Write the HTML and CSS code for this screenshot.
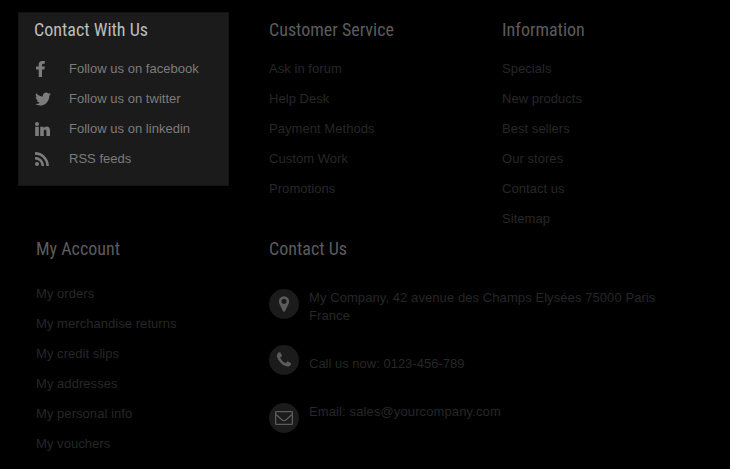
FILE: index.html
```html
<!DOCTYPE html>
<html lang="en">
<head>
<meta charset="utf-8">
<title>Footer</title>
<link rel="stylesheet" href="styles.css">
</head>
<body>
<footer class="footer">
  <section class="block social">
    <h4>Contact With Us</h4>
    <ul>
      <li><svg class="icon facebook" viewBox="0 0 9 16"><path d="M8.8.1V2.8H7.3Q6 2.8 6 4V5.6H8.8L8.4 8.4H6V16H2.7V8.4H0V5.6H2.7V3.6Q2.7 0 6.3 0Q7.8 0 8.8.1Z"/></svg><a>Follow us on facebook</a></li>
      <li><svg class="icon twitter" viewBox="0 0 1792 1792"><path d="M1684 408q-67 98-162 167 1 14 1 42 0 130-38 259.5t-115.5 248.5-184.5 210.5-258 146-323 54.5q-271 0-496-145 35 4 78 4 225 0 401-138-105-2-188-64.5t-114-159.5q33 5 61 5 43 0 85-11-112-23-185.5-111.5t-73.5-205.5v-4q68 38 146 41-66-44-105-115t-39-154q0-88 44-163 121 149 294.5 238.5t371.5 99.5q-8-38-8-74 0-134 94.5-228.5t228.5-94.5q140 0 236 102 109-21 205-78-37 115-142 178 93-10 186-50z"/></svg><a>Follow us on twitter</a></li>
      <li><svg class="icon linkedin" viewBox="0 0 15 14"><circle cx="2" cy="2" r="2"/><path d="M.2 4.8H3.8V14H.2ZM5.2 4.8H8.6V6Q9.6 4.5 11.5 4.5Q15 4.5 15 8.6V14H11.4V9.2Q11.4 7.4 10.1 7.4Q8.8 7.4 8.8 9.2V14H5.2Z"/></svg><a>Follow us on linkedin</a></li>
      <li><svg class="icon rss" viewBox="0 0 14 14"><circle cx="2" cy="12" r="2"/><path class="wave" d="M0 6.1A7.9 7.9 0 0 1 7.9 14M0 1.4A12.6 12.6 0 0 1 12.6 14"/></svg><a>RSS feeds</a></li>
    </ul>
  </section>
  <section class="block">
    <h4>Customer Service</h4>
    <ul>
      <li><a>Ask in forum</a></li>
      <li><a>Help Desk</a></li>
      <li><a>Payment Methods</a></li>
      <li><a>Custom Work</a></li>
      <li><a>Promotions</a></li>
    </ul>
  </section>
  <section class="block">
    <h4>Information</h4>
    <ul>
      <li><a>Specials</a></li>
      <li><a>New products</a></li>
      <li><a>Best sellers</a></li>
      <li><a>Our stores</a></li>
      <li><a>Contact us</a></li>
      <li><a>Sitemap</a></li>
    </ul>
  </section>
  <section class="block account">
    <h4>My Account</h4>
    <ul>
      <li><a>My orders</a></li>
      <li><a>My merchandise returns</a></li>
      <li><a>My credit slips</a></li>
      <li><a>My addresses</a></li>
      <li><a>My personal info</a></li>
      <li><a>My vouchers</a></li>
    </ul>
  </section>
  <section class="block contact">
    <h4>Contact Us</h4>
    <div class="entry address">
      <span class="disc"><svg viewBox="0 0 1792 1792"><path d="M1152 640q0-106-75-181t-181-75-181 75-75 181 75 181 181 75 181-75 75-181zm256 0q0 109-33 179l-364 774q-16 33-47.5 52t-67.5 19-67.5-19-46.5-52l-365-774q-33-70-33-179 0-212 150-362t362-150 362 150 150 362z"/></svg></span>
      <p>My Company, 42 avenue des Champs Elysées 75000 Paris France</p>
    </div>
    <div class="entry phone">
      <span class="disc"><svg viewBox="0 0 1792 1792"><path d="M1600 1240q0 27-10 70.5t-21 68.5q-21 50-122 106-94 51-186 51-27 0-53-3.5t-57.5-12.5-47-14.5-55.5-20.5-49-18q-98-35-175-83-127-79-264-216t-216-264q-48-77-83-175-3-9-18-49t-20.5-55.5-14.5-47-12.5-57.5-3.5-53q0-92 51-186 56-101 106-122 25-11 68.5-21t70.5-10q14 0 21 3 18 6 53 76 11 19 30 54t35 63.5 31 53.5q3 4 17.5 25t21.5 35.5 7 28.5q0 20-28.5 50t-62 55-62 53-28.5 46q0 9 5 22.5t8.5 20.5 14 24 11.5 19q76 137 174 235t235 174q2 1 19 11.5t24 14 20.5 8.5 22.5 5q18 0 46-28.5t53-62 55-62 50-28.5q14 0 28.5 7t35.5 21.5 25 17.5q25 15 53.5 31t63.5 35 54 30q70 35 76 53 3 7 3 21z"/></svg></span>
      <p>Call us now: 0123-456-789</p>
    </div>
    <div class="entry email">
      <span class="disc"><svg class="envelope" viewBox="0 0 18 14"><rect x=".6" y=".6" width="16.8" height="12.8" rx=".8"/><path d="M.8 3.2 6.8 8.7Q9 10.5 11.2 8.7L17.2 3.2"/></svg></span>
      <p>Email: sales@yourcompany.com</p>
    </div>
  </section>
</footer>
</body>
</html>
```

FILE: styles.css
```css
* { box-sizing: border-box; }

body {
  margin: 0;
  background: #000;
  color: #272727;
  font: 13px/18px "Liberation Sans", Arial, sans-serif;
}

h4, p, ul { margin: 0; padding: 0; }

ul { list-style: none; }

.footer {
  display: grid;
  grid-template-columns: 251px 233px 228px;
  grid-template-rows: 219px 238px;
  height: 469px;
  padding: 12px 0 0 18px;
}

.block { letter-spacing: 0.05px; }

h4 {
  height: 42px;
  color: #5c5c5c;
  font: 400 18px/36px "Roboto Condensed", Roboto, sans-serif;
  font-stretch: 75%;
  letter-spacing: 0;
}

li {
  display: flex;
  align-items: center;
  height: 30px;
}

.social {
  width: 211px;
  height: 174px;
  padding-left: 15px;
  border: 1px solid #141414;
  background: #1b1b1b;
  color: #7c7c7c;
  letter-spacing: 0.02px;
}

.social h4 {
  height: 41px;
  color: #bdbdbd;
  line-height: 34px;
}

.icon {
  flex: none;
  fill: #7c7c7c;
}

.facebook { width: 9px; height: 16px; margin: 0 24px 0 2px; }
.twitter { width: 18px; height: 18px; margin-right: 17px; }
.linkedin { width: 15px; height: 14px; margin: 0 19px 0 1px; }
.rss { width: 14px; height: 14px; margin: 0 20px 0 1px; }

.wave {
  fill: none;
  stroke: #7c7c7c;
  stroke-width: 2.6;
}

.account { padding-left: 18px; }

.account h4 { height: 48px; }

.contact { grid-column: 2 / 4; }

.entry {
  display: flex;
  gap: 10px;
  height: 56px;
}

.contact h4 { height: 58px; }

.disc {
  display: flex;
  align-items: center;
  justify-content: center;
  width: 30px;
  height: 30px;
  border-radius: 50%;
  background: #1b1b1b;
  flex: none;
}

.disc svg {
  width: 18px;
  height: 18px;
  fill: #5c5c5c;
}

.disc .envelope {
  height: 14px;
  fill: none;
  stroke: #5c5c5c;
  stroke-width: 1.3;
}

.entry p { width: 360px; }
.address p { letter-spacing: 0.08px; }
.phone { height: 58px; }
.phone p { padding-top: 10px; letter-spacing: 0; }
.email p { letter-spacing: 0.12px; }
```
